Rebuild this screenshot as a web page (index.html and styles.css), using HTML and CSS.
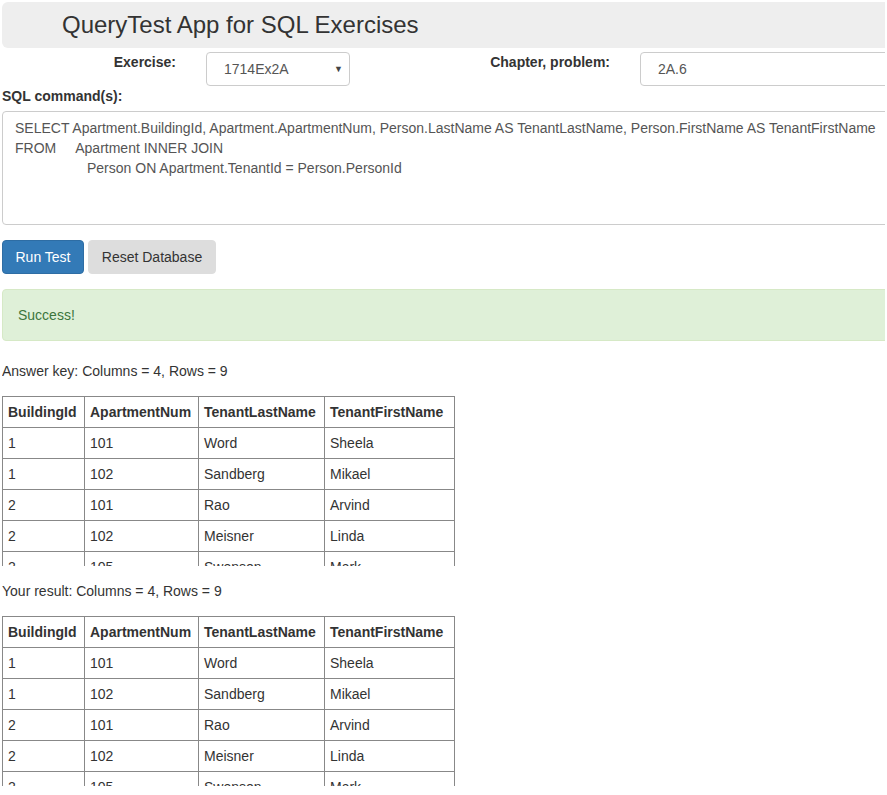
FILE: index.html
```html
<!DOCTYPE html>
<html>
<head>
<meta charset="utf-8">
<title>QueryTest App for SQL Exercises</title>
<link rel="stylesheet" href="styles.css">
</head>
<body>
<div class="page">
  <header class="banner"><h1 class="title">QueryTest App for SQL Exercises</h1></header>

  <div class="pick-row">
    <label class="pick-label ex-label">Exercise:</label>
    <div class="select-box"><span>1714Ex2A</span><span class="caret">&#9660;</span></div>
    <label class="pick-label ch-label">Chapter, problem:</label>
    <div class="text-box">2A.6</div>
  </div>

  <label class="sql-label">SQL command(s):</label>
  <div class="sql-box"><div class="sql-line">SELECT Apartment.BuildingId, Apartment.ApartmentNum, Person.LastName AS TenantLastName, Person.FirstName AS TenantFirstName</div><div class="sql-line">FROM<span class="gap1"></span>Apartment INNER JOIN</div><div class="sql-line"><span class="gap2"></span>Person ON Apartment.TenantId = Person.PersonId</div></div>

  <div class="buttons">
    <button class="btn btn-primary">Run Test</button>
    <button class="btn btn-default">Reset Database</button>
  </div>

  <div class="alert">Success!</div>

  <p class="caption">Answer key: Columns = 4, Rows = 9</p>
  <div class="table-wrap">
    <table class="result">
      <thead><tr><th>BuildingId</th><th>ApartmentNum</th><th>TenantLastName</th><th>TenantFirstName</th></tr></thead>
      <tbody>
        <tr><td>1</td><td>101</td><td>Word</td><td>Sheela</td></tr>
        <tr><td>1</td><td>102</td><td>Sandberg</td><td>Mikael</td></tr>
        <tr><td>2</td><td>101</td><td>Rao</td><td>Arvind</td></tr>
        <tr><td>2</td><td>102</td><td>Meisner</td><td>Linda</td></tr>
        <tr><td>2</td><td>105</td><td>Swenson</td><td>Mark</td></tr>
        <tr><td>3</td><td>101</td><td>Chen</td><td>Lin</td></tr>
      </tbody>
    </table>
  </div>

  <p class="caption">Your result: Columns = 4, Rows = 9</p>
  <div class="table-wrap">
    <table class="result">
      <thead><tr><th>BuildingId</th><th>ApartmentNum</th><th>TenantLastName</th><th>TenantFirstName</th></tr></thead>
      <tbody>
        <tr><td>1</td><td>101</td><td>Word</td><td>Sheela</td></tr>
        <tr><td>1</td><td>102</td><td>Sandberg</td><td>Mikael</td></tr>
        <tr><td>2</td><td>101</td><td>Rao</td><td>Arvind</td></tr>
        <tr><td>2</td><td>102</td><td>Meisner</td><td>Linda</td></tr>
        <tr><td>2</td><td>105</td><td>Swenson</td><td>Mark</td></tr>
        <tr><td>3</td><td>101</td><td>Chen</td><td>Lin</td></tr>
      </tbody>
    </table>
  </div>
</div>
</body>
</html>
```
FILE: styles.css
```css
html, body {
  overflow: hidden;
}
body {
  margin: 2px;
  font-family: "Liberation Sans", Arial, sans-serif;
  font-size: 14px;
  line-height: 20px;
  color: #333;
  background: #fff;
}
.page {
  width: 1100px;
}
.banner {
  background: #eee;
  border-radius: 6px;
  padding: 8px 60px;
}
.title {
  margin: 0;
  font-size: 24px;
  font-weight: normal;
  line-height: 30px;
  color: #333;
}
.pick-row {
  display: flex;
  align-items: flex-start;
  margin-top: 4px;
}
.pick-row > * {
  flex-shrink: 0;
}
.pick-label {
  font-weight: bold;
  text-align: right;
  line-height: 20px;
}
.ex-label {
  width: 174px;
  margin-right: 30px;
}
.ch-label {
  width: 260px;
  margin-right: 30px;
}
.select-box {
  width: 144px;
  height: 34px;
  box-sizing: border-box;
  border: 1px solid #ccc;
  border-radius: 4px;
  display: flex;
  align-items: center;
  justify-content: space-between;
  padding: 0 6px 0 17px;
  color: #555;
}
.caret {
  font-size: 9px;
  color: #444;
  line-height: 1;
}
.text-box {
  width: 400px;
  height: 34px;
  box-sizing: border-box;
  border: 1px solid #ccc;
  border-radius: 4px;
  padding: 6px 12px 6px 17px;
  color: #555;
}
.sql-label {
  display: block;
  font-weight: bold;
  margin-bottom: 5px;
}
.sql-box {
  height: 114px;
  box-sizing: border-box;
  border: 1px solid #ccc;
  border-radius: 4px;
  padding: 6px 12px;
  color: #555;
  white-space: nowrap;
}
.gap1 {
  display: inline-block;
  width: 19px;
}
.gap2 {
  display: inline-block;
  width: 72px;
}
.buttons {
  display: flex;
  gap: 4px;
  margin-top: 15px;
}
.btn {
  font-family: inherit;
  font-size: 14px;
  line-height: 20px;
  padding: 6px 12px;
  border: 1px solid transparent;
  border-radius: 4px;
  cursor: pointer;
}
.btn-primary {
  background: #337ab7;
  border-color: #2e6da4;
  color: #fff;
  min-width: 82px;
}
.btn-default {
  background: #ddd;
  border-color: #ddd;
  color: #333;
  min-width: 128px;
}
.alert {
  margin-top: 15px;
  padding: 15px;
  background: #dff0d8;
  border: 1px solid #d6e9c6;
  border-radius: 4px;
  color: #3c763d;
}
.caption {
  margin: 20px 0 15px;
}
.table-wrap + .caption {
  margin-top: 15px;
}
.table-wrap {
  height: 170px;
  overflow: hidden;
}
.result {
  border-collapse: collapse;
}
.result th, .result td {
  border: 1px solid #888;
  padding: 5px;
  text-align: left;
  line-height: 20px;
}
.result th {
  font-weight: bold;
}
.result td:nth-child(1) { width: 71px; }
.result td:nth-child(2) { width: 103px; }
.result td:nth-child(3) { width: 115px; }
.result td:nth-child(4) { width: 119px; }
```
